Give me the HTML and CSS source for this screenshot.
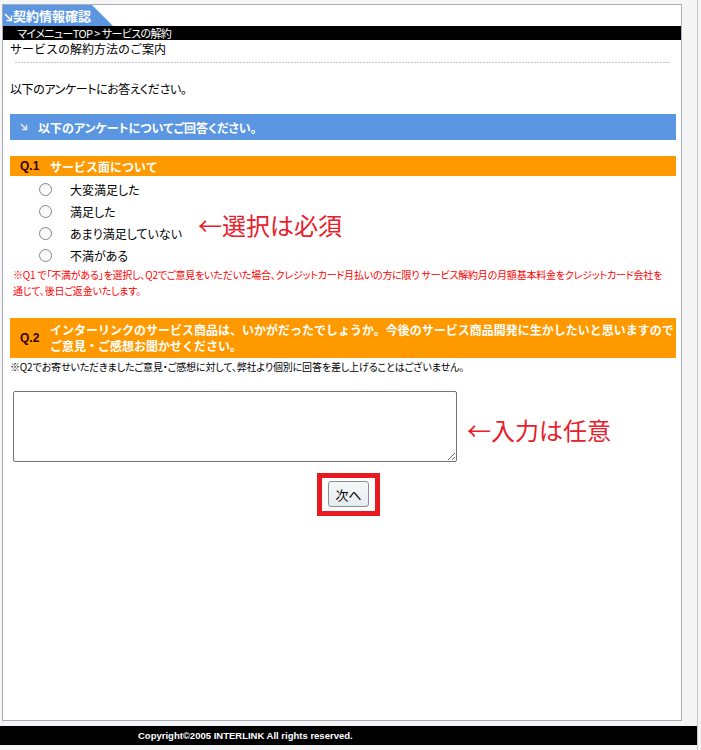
FILE: index.html
```html
<!DOCTYPE html>
<html lang="ja">
<head>
<meta charset="utf-8">
<title>契約情報確認</title>
<link rel="stylesheet" href="styles.css">
</head>
<body>
<div class="frame">
  <div class="panel">
    <div class="tab">
      <svg class="tab-arrow" width="9" height="9" viewBox="0 0 9 9"><path d="M1 1 L7.5 7.5 M7.5 2.5 V7.5 H2.5" stroke="#ffffff" stroke-width="1.5" fill="none"/></svg>
      <span class="tab-title">契約情報確認</span>
    </div>
    <div class="crumb">マイメニューTOP &gt; サービスの解約</div>
    <div class="intro">サービスの解約方法のご案内</div>
    <div class="rule"></div>
    <div class="content">
      <p class="lead">以下のアンケートにお答えください。</p>
      <div class="bluebar">
        <svg class="bar-arrow" width="8" height="8" viewBox="0 0 8 8"><path d="M1 1 L6.5 6.5 M6.5 2 V6.5 H2" stroke="#e4e8ee" stroke-width="1.5" fill="none"/></svg>
        <span>以下のアンケートについてご回答ください。</span>
      </div>

      <div class="q q1">
        <span class="qnum">Q.1</span>
        <span class="qtext">サービス面について</span>
      </div>
      <div class="q1body">
        <div class="choices">
          <label class="choice"><input type="radio" name="q1" class="radio"><span>大変満足した</span></label>
          <label class="choice"><input type="radio" name="q1" class="radio"><span>満足した</span></label>
          <label class="choice"><input type="radio" name="q1" class="radio"><span>あまり満足していない</span></label>
          <label class="choice"><input type="radio" name="q1" class="radio"><span>不満がある</span></label>
        </div>
        <div class="annot annot-select">←選択は必須</div>
      </div>
      <p class="note-red">※Q1 で「不満がある」を選択し、Q2でご意見をいただいた場合、クレジットカード月払いの方に限り サービス解約月の月額基本料金をクレジットカード会社を<br>通じて、後日ご返金いたします。</p>

      <div class="q q2">
        <span class="qnum">Q.2</span>
        <span class="qtext">インターリンクのサービス商品は、いかがだったでしょうか。今後のサービス商品開発に生かしたいと思いますので<br>ご意見・ご感想お聞かせください。</span>
      </div>
      <p class="note">※Q2でお寄せいただきましたご意見・ご感想に対して、弊社より個別に回答を差し上げることはございません。</p>

      <div class="inputrow">
        <textarea class="answer" name="q2"></textarea>
        <div class="annot annot-input">←入力は任意</div>
      </div>

      <div class="nextwrap">
        <div class="nextbox"><button class="nextbtn" type="button">次へ</button></div>
      </div>
    </div>
  </div>
  <div class="footer">Copyright©2005 INTERLINK All rights reserved.</div>
</div>
</body>
</html>
```

FILE: styles.css
```css
* { box-sizing: border-box; }
html, body { margin: 0; padding: 0; }
body {
  background: #f5f5f5;
  font-family: "Noto Sans CJK JP", "Noto Sans", sans-serif;
  font-size: 12px;
  color: #000;
}
.frame {
  width: 698px;
  min-height: 750px;
  border-right: 1px solid #c6c6ce;
  padding-top: 4px;
}
.panel {
  margin-left: 2px;
  width: 680px;
  height: 717px;
  border: 1px solid #a8aeb9;
  background: #fff;
}
.tab {
  height: 21px;
  width: 110px;
  background: #5a96e2;
  clip-path: polygon(0 0, 89px 0, 110px 100%, 0 100%);
  display: flex;
  align-items: center;
  padding-left: 1px;
  color: #fff;
  font-weight: bold;
  font-size: 13px;
}
.tab-arrow { display: block; margin-top: 3px; }
.tab-title { line-height: 21px; }
.crumb {
  margin-top: 0;
  height: 14px;
  background: #000;
  color: #fff;
  font-size: 11px;
  letter-spacing: -0.6px;
  line-height: 14px;
  padding-left: 14px;
  font-feature-settings: "palt";
}
.intro {
  margin-top: 1px;
  line-height: 16px;
  padding-left: 7px;
}
.rule {
  margin: 5px 11px 0 12px;
  height: 1px;
  background: repeating-linear-gradient(90deg, #c6c6c6 0 2px, transparent 2px 3px);
}
.content {
  padding: 0 5px 0 7px;
  font-feature-settings: "palt";
}
.lead {
  margin: 18px 0 0;
  line-height: 16px;
  letter-spacing: -0.4px;
}
.bluebar {
  margin-top: 17px;
  height: 26px;
  background: #5a96e2;
  color: #fff;
  font-weight: bold;
  display: flex;
  align-items: center;
  padding-left: 10px;
}
.bar-arrow { display: block; margin-right: 10px; }
.q {
  background: #ff9900;
  display: flex;
  color: #fff;
  font-weight: bold;
  font-feature-settings: normal;
}
.qnum {
  flex: none;
  width: 40px;
  padding-left: 10px;
  color: #330000;
  font-family: "Liberation Sans", sans-serif;
  font-size: 12px;
}
.qtext { white-space: nowrap; }
.q1 {
  margin-top: 16px;
  height: 20px;
  align-items: center;
}
.q1body {
  display: flex;
}
.choices {
  margin-top: 2px;
  width: 188px;
  flex: none;
}
.choice {
  height: 22px;
  display: flex;
  align-items: center;
  padding-left: 29px;
}
.radio {
  appearance: none;
  -webkit-appearance: none;
  width: 13px;
  height: 13px;
  margin: 0 18px 0 0;
  border: 1px solid #858585;
  border-radius: 50%;
  background: linear-gradient(#f6f6f6, #ffffff);
  flex: none;
}
.annot {
  font-size: 24px;
  line-height: 24px;
  color: #e8202a;
  font-feature-settings: normal;
  white-space: nowrap;
}
.annot-select {
  align-self: center;
  margin-top: 8px;
}
.note-red {
  margin: 1px 0 0;
  padding-left: 3px;
  font-size: 10px;
  line-height: 16px;
  letter-spacing: -0.2px;
  color: #ff0000;
  white-space: nowrap;
}
.q2 {
  margin-top: 19px;
  padding: 4px 0;
  align-items: center;
}
.q2 .qtext { line-height: 16px; }
.note {
  margin: 1px 0 0;
  font-size: 10px;
  line-height: 16px;
  letter-spacing: -0.15px;
  white-space: nowrap;
}
.inputrow {
  margin-top: 16px;
  display: flex;
  align-items: center;
  padding-left: 3px;
}
.answer {
  display: block;
  width: 444px;
  height: 71px;
  margin: 0;
  border: 1px solid #767676;
  border-radius: 2px;
  resize: both;
  font-family: inherit;
}
.annot-input {
  margin-left: 10px;
  margin-top: 6px;
}
.nextwrap {
  margin-top: 11px;
  padding-left: 307px;
}
.nextbox {
  display: inline-flex;
  border: 5px solid #e8191f;
  padding: 3px 6px 4px;
}
.nextbtn {
  width: 41px;
  height: 26px;
  padding: 0;
  border: 1px solid #8f8f8f;
  border-radius: 3px;
  background: linear-gradient(#f5f8f9, #e6edef);
  font-family: "Noto Sans CJK JP", sans-serif;
  font-size: 13px;
  color: #000;
}
.footer {
  margin-top: 5px;
  height: 19px;
  background: #000;
  color: #fff;
  font-family: "Liberation Sans", sans-serif;
  font-weight: bold;
  font-size: 9.5px;
  line-height: 19px;
  padding-left: 138px;
}
```
